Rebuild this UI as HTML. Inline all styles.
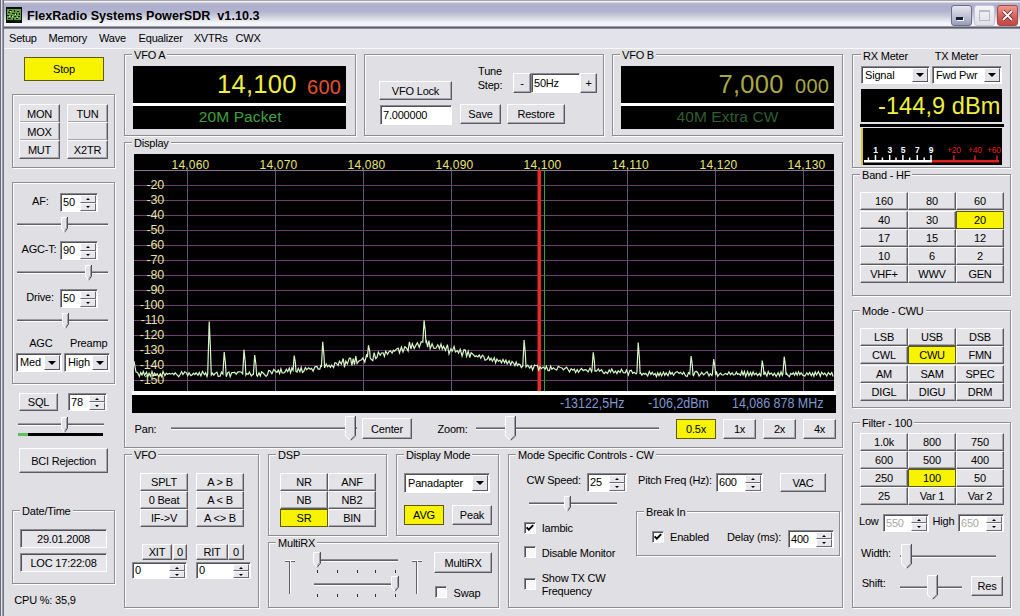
<!DOCTYPE html><html><head><meta charset="utf-8"><style>
*{box-sizing:border-box}
body{margin:0;width:1020px;height:616px;overflow:hidden;position:relative;background:#e0dfe3;font-family:"Liberation Sans",sans-serif;font-size:11px;color:#000;letter-spacing:-0.2px}
div{position:absolute}
.t{white-space:nowrap}
.g{border:1px solid #8e8d94;box-shadow:inset 1px 1px 0 #fff,1px 1px 0 #fff;box-sizing:content-box}
.g{width:auto}
.gl{background:#e0dfe3;padding:0 2px 0 2px;font-size:11px;line-height:13px;white-space:nowrap}
.b{background:#e4e3e8;border-top:1px solid #fff;border-left:1px solid #fff;border-right:1px solid #5a5a60;border-bottom:1px solid #5a5a60;box-shadow:inset -1px -1px 0 #a6a5ab;display:flex;align-items:center;justify-content:center;font-size:11px;white-space:nowrap;overflow:hidden}
.b.y{background:#f8f400;border:1px solid #5c5a10;box-shadow:none}
.sp{background:#fff;border-top:1px solid #8a8990;border-left:1px solid #8a8990;border-right:1px solid #fff;border-bottom:1px solid #fff;box-shadow:inset 1px 1px 0 #505058}
.spt{left:2px;top:1px;white-space:nowrap}
.spb{right:1px;width:16px;background:#e8e8ec;border-top:1px solid #fff;border-left:1px solid #fff;border-bottom:1px solid #6a6a70;border-right:1px solid #6a6a70}
.up,.dn{position:absolute;left:5px;width:0;height:0;border-left:2.5px solid transparent;border-right:2.5px solid transparent}
.up{top:2px;border-bottom:2.5px solid #000}
.dn{top:2px;border-top:2.5px solid #000}
i{display:block}
.cb{background:#fff;border-top:1px solid #8a8990;border-left:1px solid #8a8990;border-right:1px solid #fff;border-bottom:1px solid #fff;box-shadow:inset 1px 1px 0 #505058}
.cbt{left:3px;top:1px;white-space:nowrap}
.cbb{right:1px;top:1px;bottom:1px;width:16px;background:#e4e3e8;border-top:1px solid #fff;border-left:1px solid #fff;border-bottom:1px solid #5a5a60;border-right:1px solid #5a5a60}
.dn2{position:absolute;left:3px;top:50%;margin-top:-2px;width:0;height:0;border-left:4px solid transparent;border-right:4px solid transparent;border-top:4px solid #000}
.tr{border-top:1px solid #8a8990;border-left:1px solid #8a8990;border-bottom:1px solid #fff;border-right:1px solid #fff;background:#c8c7cc;height:4px}
.th{width:11px;height:21px;}
.ck{background:#f8f8f8;border-top:1px solid #8a8990;border-left:1px solid #8a8990;border-right:1px solid #fff;border-bottom:1px solid #fff;box-shadow:inset 1px 1px 0 #505058}
.ck svg{position:absolute;left:0px;top:0px}
.blk{background:#000}
</style></head><body><div style="left:0;top:0;width:1020px;height:29px;background:linear-gradient(to bottom,#a4a4ac 0px,#a4a4ac 1px,#f6f6fa 1px,#f2f2f8 2px,#b8b8cc 3px,#aeaecc 6px,#b0b2d0 11px,#c4c6d6 15px,#e2e4ec 20px,#f4f6fb 23px,#f2f4f9 26px,#a0a0ac 26px,#a0a0ac 27px,#5c5c6a 27px,#5c5c6a 28px,#8c8c98 28px,#8c8c98 29px)"></div>
<div style="left:0;top:0;width:4px;height:616px;background:linear-gradient(to right,#6a6a78 0px,#6a6a78 1px,#e4e4ec 1px,#e4e4ec 2px,#9a9aa8 2px,#9a9aa8 3px,#747482 3px,#747482 4px)"></div>
<svg style="position:absolute;left:6px;top:7px" width="16" height="16" viewBox="0 0 16 16" shape-rendering="crispEdges"><rect width="16" height="16" fill="#081006"/><rect x="1" y="2" width="14" height="11" fill="#6a9c48"/><path d="M3 3h3v1h-3zM8 3h1v2h-1zM11 4h2v1h-2zM2 5h2v1h-2zM6 6h3v1h-3zM10 6h1v2h-1zM13 6h1v2h-1zM1 8h2v1h-2zM5 8h1v2h-1zM8 9h2v1h-2zM12 9h2v1h-2zM2 11h3v1h-3zM7 11h1v2h-1zM10 11h2v1h-2zM1 13h1v2h-1zM4 13h4v1h-4zM9 13h5v2h-5z" fill="#142010"/><path d="M4 4h1v1h-1zM9 7h1v1h-1zM6 9h1v1h-1zM11 10h1v1h-1zM3 9h1v1h-1z" fill="#c8f0a8"/></svg>
<div class="t" style="left:27px;top:10.33px;font-size:12.6px;line-height:12.6px;color:#000;font-weight:bold;letter-spacing:0px">FlexRadio Systems PowerSDR&nbsp; v1.10.3</div>
<div style="left:951px;top:5px;width:21px;height:21px;border:1px solid #6a6c88;border-radius:3px;background:linear-gradient(to bottom,#e4e6f0,#b4b6cc 70%,#9a9cb6)"><div style="left:4px;top:11px;width:7px;height:3px;background:#1a1a40;box-shadow:1px 1px 0 #fff"></div></div>
<div style="left:974px;top:5px;width:21px;height:21px;border:1px solid #c4c6d8;border-radius:3px;background:linear-gradient(to bottom,#f4f4f8,#e0e0ea)"><div style="left:4px;top:4px;width:11px;height:11px;border:1px solid #b8bac8;border-top-width:2px"></div></div>
<div style="left:997px;top:5px;width:21px;height:21px;border:1px solid #a04848;border-radius:3px;background:linear-gradient(to bottom,#ee9a90,#d85e5a 55%,#c44844)"><svg style="position:absolute;left:3px;top:3px" width="13" height="13" viewBox="0 0 13 13"><path d="M2 2L11 11M11 2L2 11" stroke="#5a2020" stroke-width="3.2"/><path d="M2 2L11 11M11 2L2 11" stroke="#fff" stroke-width="1.8"/></svg></div>
<div style="left:4px;top:29px;width:1016px;height:19px;background:#e3e4eb"></div>
<div style="left:4px;top:48px;width:1016px;height:1px;background:#f8f8fc"></div>
<div class="t" style="left:9px;top:32.69px;font-size:11px;line-height:11px;">Setup</div>
<div class="t" style="left:48.5px;top:32.69px;font-size:11px;line-height:11px;">Memory</div>
<div class="t" style="left:99px;top:32.69px;font-size:11px;line-height:11px;">Wave</div>
<div class="t" style="left:138.6px;top:32.69px;font-size:11px;line-height:11px;">Equalizer</div>
<div class="t" style="left:193.7px;top:32.69px;font-size:11px;line-height:11px;">XVTRs</div>
<div class="t" style="left:235.6px;top:32.69px;font-size:11px;line-height:11px;">CWX</div>
<div class="b y" style="left:24px;top:57px;width:80px;height:24px"><span>Stop</span></div>
<div class="g" style="left:12px;top:94px;width:101px;height:72px;"></div>
<div class="b" style="left:19px;top:104px;width:41px;height:19px;"><span>MON</span></div>
<div class="b" style="left:67px;top:104px;width:41px;height:19px;"><span>TUN</span></div>
<div class="b" style="left:19px;top:122px;width:41px;height:19px;"><span>MOX</span></div>
<div class="b" style="left:67px;top:122px;width:41px;height:19px;"><span></span></div>
<div class="b" style="left:19px;top:140px;width:41px;height:19px;"><span>MUT</span></div>
<div class="b" style="left:67px;top:140px;width:41px;height:19px;"><span>X2TR</span></div>
<div class="g" style="left:12px;top:182px;width:101px;height:200px;"></div>
<div class="t" style="left:32px;top:196.19px;font-size:11px;line-height:11px;">AF:</div>
<div class="sp" style="left:60px;top:193px;width:38px;height:19px;"><div class="spt" style="color:#000;font-size:11px;line-height:15px">50</div><div class="spb" style="top:1px;height:8px"><i class="up"></i></div><div class="spb" style="top:9px;height:8px"><i class="dn"></i></div></div>
<div style="left:17px;top:223px;width:91px;height:1px;background:#9a9aa0"></div>
<div style="left:17px;top:224px;width:91px;height:1px;background:#606066"></div>
<div style="left:17px;top:225px;width:91px;height:1px;background:#fff"></div>
<svg style="position:absolute;left:61.0px;top:217px" width="7" height="16" viewBox="0 0 7 16"><path d="M0.5 11 V0.5 H6.5 V11 L3.5 15.5 Z" fill="#e4e3e8"/><path d="M0.5 11 V0.5 H5.5" fill="none" stroke="#fff"/><path d="M6.5 0 V11 L3.5 15.5" fill="none" stroke="#505058"/><path d="M5.5 1 V10.5 L3.5 14.5" fill="none" stroke="#a0a0a8"/><path d="M0.5 11 L3.5 15.5" fill="none" stroke="#fff"/></svg>
<div class="t" style="left:21.5px;top:244.09px;font-size:11px;line-height:11px;">AGC-T:</div>
<div class="sp" style="left:60px;top:241px;width:38px;height:19px;"><div class="spt" style="color:#000;font-size:11px;line-height:15px">90</div><div class="spb" style="top:1px;height:8px"><i class="up"></i></div><div class="spb" style="top:9px;height:8px"><i class="dn"></i></div></div>
<div style="left:17px;top:271px;width:91px;height:1px;background:#9a9aa0"></div>
<div style="left:17px;top:272px;width:91px;height:1px;background:#606066"></div>
<div style="left:17px;top:273px;width:91px;height:1px;background:#fff"></div>
<svg style="position:absolute;left:85.0px;top:265px" width="7" height="16" viewBox="0 0 7 16"><path d="M0.5 11 V0.5 H6.5 V11 L3.5 15.5 Z" fill="#e4e3e8"/><path d="M0.5 11 V0.5 H5.5" fill="none" stroke="#fff"/><path d="M6.5 0 V11 L3.5 15.5" fill="none" stroke="#505058"/><path d="M5.5 1 V10.5 L3.5 14.5" fill="none" stroke="#a0a0a8"/><path d="M0.5 11 L3.5 15.5" fill="none" stroke="#fff"/></svg>
<div class="t" style="left:26.3px;top:291.69px;font-size:11px;line-height:11px;">Drive:</div>
<div class="sp" style="left:60px;top:289px;width:38px;height:19px;"><div class="spt" style="color:#000;font-size:11px;line-height:15px">50</div><div class="spb" style="top:1px;height:8px"><i class="up"></i></div><div class="spb" style="top:9px;height:8px"><i class="dn"></i></div></div>
<div style="left:17px;top:319px;width:91px;height:1px;background:#9a9aa0"></div>
<div style="left:17px;top:320px;width:91px;height:1px;background:#606066"></div>
<div style="left:17px;top:321px;width:91px;height:1px;background:#fff"></div>
<svg style="position:absolute;left:62.0px;top:313px" width="7" height="16" viewBox="0 0 7 16"><path d="M0.5 11 V0.5 H6.5 V11 L3.5 15.5 Z" fill="#e4e3e8"/><path d="M0.5 11 V0.5 H5.5" fill="none" stroke="#fff"/><path d="M6.5 0 V11 L3.5 15.5" fill="none" stroke="#505058"/><path d="M5.5 1 V10.5 L3.5 14.5" fill="none" stroke="#a0a0a8"/><path d="M0.5 11 L3.5 15.5" fill="none" stroke="#fff"/></svg>
<div class="t" style="left:29.2px;top:338.49px;font-size:11px;line-height:11px;">AGC</div>
<div class="t" style="left:70px;top:338.49px;font-size:11px;line-height:11px;">Preamp</div>
<div class="cb" style="left:16px;top:353px;width:46px;height:19px;"><div class="cbt" style="font-size:11px;line-height:15px">Med</div><div class="cbb"><i class="dn2"></i></div></div>
<div class="cb" style="left:64px;top:353px;width:46px;height:19px;"><div class="cbt" style="font-size:11px;line-height:15px">High</div><div class="cbb"><i class="dn2"></i></div></div>
<div class="b" style="left:19px;top:393px;width:39px;height:18px;"><span>SQL</span></div>
<div class="sp" style="left:68px;top:393px;width:39px;height:18px;"><div class="spt" style="color:#000;font-size:11px;line-height:14px">78</div><div class="spb" style="top:1px;height:7px"><i class="up"></i></div><div class="spb" style="top:8px;height:8px"><i class="dn"></i></div></div>
<div style="left:18px;top:423px;width:86px;height:1px;background:#9a9aa0"></div>
<div style="left:18px;top:424px;width:86px;height:1px;background:#606066"></div>
<div style="left:18px;top:425px;width:86px;height:1px;background:#fff"></div>
<svg style="position:absolute;left:61.0px;top:417px" width="7" height="16" viewBox="0 0 7 16"><path d="M0.5 11 V0.5 H6.5 V11 L3.5 15.5 Z" fill="#e4e3e8"/><path d="M0.5 11 V0.5 H5.5" fill="none" stroke="#fff"/><path d="M6.5 0 V11 L3.5 15.5" fill="none" stroke="#505058"/><path d="M5.5 1 V10.5 L3.5 14.5" fill="none" stroke="#a0a0a8"/><path d="M0.5 11 L3.5 15.5" fill="none" stroke="#fff"/></svg>
<div style="left:18px;top:433px;width:85px;height:3px;background:#000"></div>
<div style="left:18px;top:433px;width:10px;height:3px;background:#5cc05c"></div>
<div class="b" style="left:19px;top:448px;width:89px;height:25px;"><span>BCI Rejection</span></div>
<div class="g" style="left:12px;top:510px;width:101px;height:72px;"></div>
<div class="gl" style="left:20px;top:505px">Date/Time</div>
<div class="sp" style="left:20px;top:529px;width:87px;height:19px;background:#e6e5ea;display:flex;align-items:center;justify-content:center;font-size:11px"><span>29.01.2008</span></div>
<div class="sp" style="left:20px;top:553px;width:87px;height:19px;background:#e6e5ea;display:flex;align-items:center;justify-content:center;font-size:11px"><span>LOC 17:22:08</span></div>
<div class="t" style="left:14.3px;top:594.69px;font-size:11px;line-height:11px;">CPU %: 35,9</div>
<div class="g" style="left:124px;top:54px;width:230px;height:80px;"></div>
<div class="gl" style="left:132px;top:49px">VFO A</div>
<div class="blk" style="left:133px;top:66px;width:213px;height:37px"></div>
<div style="left:133px;top:103px;width:213px;height:3px;background:#fff"></div>
<div class="blk" style="left:133px;top:106px;width:213px;height:23px"></div>
<div class="t" style="left:217px;top:72.11px;font-size:25.5px;line-height:25.5px;color:#f0f040;letter-spacing:0.3px">14,100</div>
<div class="t" style="left:307px;top:76.77px;font-size:20px;line-height:20px;color:#e85030;letter-spacing:0.3px">600</div>
<div class="t" style="left:198.8px;top:109.48px;font-size:15.5px;line-height:15.5px;color:#40a040;letter-spacing:0.1px">20M Packet</div>
<div class="g" style="left:364px;top:54px;width:238px;height:80px;"></div>
<div class="b" style="left:379px;top:81px;width:73px;height:19px;"><span>VFO Lock</span></div>
<div class="sp" style="left:380px;top:105px;width:72px;height:20px"><div class="spt" style="font-size:11px;line-height:16px">7.000000</div></div>
<div class="b" style="left:460px;top:104px;width:41px;height:20px;"><span>Save</span></div>
<div class="b" style="left:507px;top:104px;width:58px;height:20px;"><span>Restore</span></div>
<div class="t" style="left:470px;top:65px;width:40px;text-align:center;font-size:11px;line-height:13.5px">Tune<br>Step:</div>
<div class="b" style="left:513px;top:73px;width:18px;height:20px;"><span>-</span></div>
<div class="sp" style="left:531px;top:73px;width:49px;height:20px"><div class="spt" style="font-size:11px;line-height:16px">50Hz</div></div>
<div class="b" style="left:580px;top:73px;width:17px;height:20px;"><span>+</span></div>
<div class="g" style="left:612px;top:54px;width:229px;height:80px;"></div>
<div class="gl" style="left:620px;top:49px">VFO B</div>
<div class="blk" style="left:621px;top:66px;width:213px;height:37px"></div>
<div style="left:621px;top:103px;width:213px;height:3px;background:#fff"></div>
<div class="blk" style="left:621px;top:106px;width:213px;height:23px"></div>
<div class="t" style="left:718.5px;top:71.81px;font-size:25.5px;line-height:25.5px;color:#a8a848;letter-spacing:0.3px">7,000</div>
<div class="t" style="left:795px;top:76.47px;font-size:20px;line-height:20px;color:#a8a848;letter-spacing:0.3px">000</div>
<div class="t" style="left:676.5px;top:109.48px;font-size:15.5px;line-height:15.5px;color:#2e5e2e;letter-spacing:0.1px">40M Extra CW</div>
<div class="g" style="left:124px;top:142px;width:717px;height:304px;"></div>
<div class="gl" style="left:132px;top:137px">Display</div>
<svg style="position:absolute;left:0;top:0" width="1020" height="616"><rect x="134" y="154" width="700" height="237" fill="#000"/><line x1="134" y1="185.5" x2="834" y2="185.5" stroke="#6e3e70" stroke-width="1"/><line x1="134" y1="200.5" x2="834" y2="200.5" stroke="#6e3e70" stroke-width="1"/><line x1="134" y1="215.5" x2="834" y2="215.5" stroke="#6e3e70" stroke-width="1"/><line x1="134" y1="230.5" x2="834" y2="230.5" stroke="#6e3e70" stroke-width="1"/><line x1="134" y1="245.5" x2="834" y2="245.5" stroke="#6e3e70" stroke-width="1"/><line x1="134" y1="260.5" x2="834" y2="260.5" stroke="#6e3e70" stroke-width="1"/><line x1="134" y1="275.5" x2="834" y2="275.5" stroke="#6e3e70" stroke-width="1"/><line x1="134" y1="290.5" x2="834" y2="290.5" stroke="#6e3e70" stroke-width="1"/><line x1="134" y1="305.5" x2="834" y2="305.5" stroke="#6e3e70" stroke-width="1"/><line x1="134" y1="320.5" x2="834" y2="320.5" stroke="#6e3e70" stroke-width="1"/><line x1="134" y1="335.5" x2="834" y2="335.5" stroke="#6e3e70" stroke-width="1"/><line x1="134" y1="350.5" x2="834" y2="350.5" stroke="#6e3e70" stroke-width="1"/><line x1="134" y1="365.5" x2="834" y2="365.5" stroke="#6e3e70" stroke-width="1"/><line x1="134" y1="380.5" x2="834" y2="380.5" stroke="#6e3e70" stroke-width="1"/><line x1="134" y1="170.5" x2="834" y2="170.5" stroke="#8c7090" stroke-width="1"/><line x1="187.5" y1="170" x2="187.5" y2="391" stroke="#665478" stroke-width="1"/><line x1="275.5" y1="170" x2="275.5" y2="391" stroke="#665478" stroke-width="1"/><line x1="363.5" y1="170" x2="363.5" y2="391" stroke="#665478" stroke-width="1"/><line x1="451.5" y1="170" x2="451.5" y2="391" stroke="#665478" stroke-width="1"/><line x1="539.5" y1="170" x2="539.5" y2="391" stroke="#665478" stroke-width="1"/><line x1="627.5" y1="170" x2="627.5" y2="391" stroke="#665478" stroke-width="1"/><line x1="715.5" y1="170" x2="715.5" y2="391" stroke="#665478" stroke-width="1"/><line x1="803.5" y1="170" x2="803.5" y2="391" stroke="#665478" stroke-width="1"/><text x="190.5" y="168.8" fill="#e6e67c" font-size="12" letter-spacing="0.2" text-anchor="middle" font-family="Liberation Sans">14,060</text><text x="278.5" y="168.8" fill="#e6e67c" font-size="12" letter-spacing="0.2" text-anchor="middle" font-family="Liberation Sans">14,070</text><text x="366.5" y="168.8" fill="#e6e67c" font-size="12" letter-spacing="0.2" text-anchor="middle" font-family="Liberation Sans">14,080</text><text x="454.5" y="168.8" fill="#e6e67c" font-size="12" letter-spacing="0.2" text-anchor="middle" font-family="Liberation Sans">14,090</text><text x="542.5" y="168.8" fill="#e6e67c" font-size="12" letter-spacing="0.2" text-anchor="middle" font-family="Liberation Sans">14,100</text><text x="630.5" y="168.8" fill="#e6e67c" font-size="12" letter-spacing="0.2" text-anchor="middle" font-family="Liberation Sans">14,110</text><text x="718.5" y="168.8" fill="#e6e67c" font-size="12" letter-spacing="0.2" text-anchor="middle" font-family="Liberation Sans">14,120</text><text x="806.5" y="168.8" fill="#e6e67c" font-size="12" letter-spacing="0.2" text-anchor="middle" font-family="Liberation Sans">14,130</text><text x="164" y="189.3" fill="#e4e2a4" font-size="12.5" text-anchor="end" font-family="Liberation Sans">-20</text><text x="164" y="204.3" fill="#e4e2a4" font-size="12.5" text-anchor="end" font-family="Liberation Sans">-30</text><text x="164" y="219.3" fill="#e4e2a4" font-size="12.5" text-anchor="end" font-family="Liberation Sans">-40</text><text x="164" y="234.3" fill="#e4e2a4" font-size="12.5" text-anchor="end" font-family="Liberation Sans">-50</text><text x="164" y="249.3" fill="#e4e2a4" font-size="12.5" text-anchor="end" font-family="Liberation Sans">-60</text><text x="164" y="264.3" fill="#e4e2a4" font-size="12.5" text-anchor="end" font-family="Liberation Sans">-70</text><text x="164" y="279.3" fill="#e4e2a4" font-size="12.5" text-anchor="end" font-family="Liberation Sans">-80</text><text x="164" y="294.3" fill="#e4e2a4" font-size="12.5" text-anchor="end" font-family="Liberation Sans">-90</text><text x="164" y="309.3" fill="#e4e2a4" font-size="12.5" text-anchor="end" font-family="Liberation Sans">-100</text><text x="164" y="324.3" fill="#e4e2a4" font-size="12.5" text-anchor="end" font-family="Liberation Sans">-110</text><text x="164" y="339.3" fill="#e4e2a4" font-size="12.5" text-anchor="end" font-family="Liberation Sans">-120</text><text x="164" y="354.3" fill="#e4e2a4" font-size="12.5" text-anchor="end" font-family="Liberation Sans">-130</text><text x="164" y="369.3" fill="#e4e2a4" font-size="12.5" text-anchor="end" font-family="Liberation Sans">-140</text><text x="164" y="384.3" fill="#e4e2a4" font-size="12.5" text-anchor="end" font-family="Liberation Sans">-150</text><rect x="537.5" y="170" width="3.5" height="221" fill="#e42a2a"/><line x1="544.5" y1="170" x2="544.5" y2="391" stroke="#30a040" stroke-width="1"/><polyline points="134.0,361.0 136.0,372.0 137.5,372.3 139.4,376.4 140.7,372.5 142.0,375.0 143.3,371.5 144.6,375.2 146.5,372.2 147.8,376.4 149.1,373.3 150.4,376.2 152.0,371.6 153.3,375.5 154.6,373.1 155.9,375.0 157.2,373.7 158.5,376.4 160.4,373.8 161.7,376.6 163.0,371.3 164.9,375.7 166.2,373.1 167.5,374.2 169.4,373.5 170.7,374.2 172.6,373.3 173.9,374.7 175.2,372.8 177.1,374.8 178.7,376.7 180.3,374.3 181.6,371.6 182.9,374.6 184.8,371.8 186.4,372.8 187.7,375.7 189.0,372.8 190.9,375.7 192.2,374.7 193.5,373.2 194.8,374.6 196.1,372.8 198.0,375.3 199.3,372.5 200.9,376.0 202.5,371.4 204.4,374.7 205.7,372.6 207.0,376.6 207.7,374.0 209.2,321.5 210.4,347.8 211.3,375.0 212.5,373.2 213.8,375.2 215.1,373.4 217.0,372.1 218.3,376.6 220.2,376.0 221.5,372.1 222.9,374.0 224.2,352.0 225.4,363.0 226.1,375.0 226.3,376.8 227.6,372.8 228.9,371.9 230.2,376.6 231.8,372.6 233.1,372.7 234.4,372.3 236.3,374.2 237.6,372.1 239.2,371.9 241.1,372.0 242.7,374.0 244.0,349.7 245.2,361.9 245.9,375.0 246.8,373.6 248.1,374.4 249.4,372.0 251.3,375.9 253.2,373.8 253.4,374.0 254.7,355.0 255.9,364.5 256.6,375.0 257.4,376.2 259.0,372.7 260.3,375.9 261.6,371.7 262.9,372.8 264.5,374.5 266.1,376.4 267.4,374.9 268.7,370.5 270.0,370.7 271.9,373.8 273.8,369.3 275.4,371.2 277.0,372.4 278.3,370.1 279.6,373.6 280.9,368.9 282.2,373.0 283.8,373.0 285.1,371.8 286.4,369.3 287.7,371.7 289.3,368.0 290.6,372.8 291.9,367.9 293.1,370.3 294.2,355.5 295.4,362.9 295.9,371.3 297.0,372.0 298.3,368.4 299.9,371.9 301.2,367.5 302.5,372.4 303.8,371.3 305.4,367.5 306.7,369.8 308.6,367.8 310.2,369.2 311.5,368.4 313.1,371.1 315.0,366.7 316.9,366.4 318.2,369.1 319.8,369.1 321.1,364.8 321.4,366.9 322.7,341.8 323.9,354.3 324.6,367.9 326.2,363.9 327.5,366.7 329.1,365.1 330.4,367.3 331.7,365.0 333.6,367.7 334.9,362.7 336.2,363.0 338.1,365.5 339.4,361.2 341.3,364.1 343.2,358.5 344.5,367.3 345.8,361.2 347.4,363.9 349.3,358.1 350.6,358.3 351.9,365.3 353.2,358.7 354.5,364.6 355.8,356.1 357.1,363.5 358.7,361.2 360.3,360.2 361.6,359.7 362.9,357.9 364.8,362.1 366.7,354.2 367.4,357.1 368.5,345.3 369.7,351.2 370.2,358.1 371.2,359.3 372.8,360.7 374.1,352.7 375.7,358.7 377.0,357.5 378.3,352.0 380.2,355.3 381.5,353.0 383.1,352.9 384.4,356.5 385.7,351.2 387.6,354.2 388.9,351.8 390.2,350.7 392.1,353.1 393.4,350.2 394.7,351.1 396.6,348.9 398.2,348.2 399.5,352.9 401.4,347.0 403.0,351.9 404.9,346.7 406.5,347.9 408.1,351.1 409.4,341.9 411.0,349.2 412.3,343.7 414.2,348.5 416.1,344.9 417.4,342.8 419.3,347.3 421.2,341.7 422.8,342.2 424.1,320.2 425.3,331.2 426.0,343.2 426.3,340.0 427.6,347.2 428.9,340.5 430.2,348.7 432.1,343.9 434.0,348.4 435.9,348.2 437.8,344.8 439.4,348.5 441.0,344.0 442.3,349.2 443.6,346.2 445.5,350.4 447.4,344.6 449.0,354.0 450.9,348.8 452.2,351.2 454.1,346.4 455.4,352.0 457.3,350.6 458.6,353.0 460.2,349.2 462.1,356.0 464.0,349.8 465.3,350.1 466.6,356.4 468.2,351.3 469.8,357.7 471.1,352.8 472.4,353.8 473.7,355.2 475.0,356.7 476.3,355.7 477.9,356.9 479.2,354.9 480.8,358.2 482.4,355.3 483.7,356.4 485.0,360.2 486.9,359.6 488.5,356.6 489.8,360.2 491.1,358.3 492.4,361.2 494.3,357.7 495.6,362.8 496.9,359.0 498.5,361.4 500.1,360.1 501.4,362.8 503.0,359.5 504.6,362.8 505.9,360.0 507.2,363.8 509.1,360.9 510.7,364.9 512.0,361.4 513.6,363.1 514.9,365.8 516.2,362.1 517.5,365.6 518.8,364.0 520.1,364.7 521.4,367.7 522.8,366.0 524.1,340.0 525.3,353.0 526.0,367.0 527.8,365.1 529.7,368.1 531.3,365.8 532.6,370.1 534.5,365.1 536.1,365.7 537.4,365.3 538.7,370.0 540.0,366.7 541.3,368.7 543.2,367.1 545.1,369.2 546.4,366.2 548.0,370.6 549.3,370.6 550.6,366.0 551.9,369.3 553.5,367.9 555.4,369.6 556.7,370.1 558.3,366.3 560.2,367.5 562.1,368.0 563.4,369.9 564.7,368.7 566.6,367.1 568.2,369.8 569.5,371.9 571.1,368.7 573.0,370.3 574.3,369.1 575.6,372.6 577.2,369.5 578.5,372.3 579.8,370.4 581.4,368.5 583.3,370.6 584.9,369.6 586.2,369.9 588.1,372.0 590.0,368.1 591.6,371.8 592.0,370.7 593.2,352.3 594.4,361.5 595.0,371.7 595.1,370.4 596.4,371.3 598.3,368.8 599.6,371.2 601.5,369.6 603.1,372.5 604.4,373.6 605.7,371.9 607.6,373.5 609.2,369.8 610.5,372.2 611.8,368.9 613.7,372.7 615.6,371.2 616.9,373.7 618.2,370.7 620.1,372.4 621.4,369.3 623.3,372.6 625.2,372.8 626.5,370.0 628.4,375.0 629.7,370.7 631.3,370.3 632.6,373.3 634.2,372.2 636.1,373.9 636.9,372.9 638.2,342.6 639.4,357.8 640.1,373.9 640.3,372.4 641.9,375.1 643.2,373.3 644.5,374.3 645.8,373.4 647.7,376.0 649.3,371.5 650.9,374.5 652.2,372.3 653.5,374.9 655.1,373.5 656.4,376.5 657.7,372.9 659.0,375.6 660.3,372.8 661.6,375.9 663.5,372.1 664.8,375.3 666.1,372.8 668.0,375.6 669.6,371.4 670.9,374.3 672.2,372.5 673.5,375.3 675.4,372.5 677.3,371.6 679.2,373.5 680.5,372.4 682.4,374.3 683.7,372.2 685.6,375.8 687.2,376.5 688.5,372.6 689.8,374.0 691.1,356.0 692.3,365.0 693.0,375.0 693.6,375.6 694.9,372.1 696.2,371.2 697.8,372.7 699.1,376.1 700.4,374.5 701.7,372.4 703.6,374.8 705.2,373.4 707.1,371.7 709.0,376.0 710.3,373.7 711.9,375.5 712.4,374.0 713.7,359.0 714.9,366.5 715.6,375.0 716.4,371.4 717.7,376.4 719.3,374.2 720.6,373.2 721.9,375.0 723.5,374.9 725.4,373.4 727.3,374.6 728.9,372.0 730.5,374.8 732.1,372.8 733.4,374.8 735.0,374.7 736.3,372.1 737.6,374.4 738.9,373.7 740.5,375.3 741.8,371.2 743.1,374.9 744.4,371.5 745.7,376.6 747.6,371.5 748.9,375.6 750.5,372.5 751.8,375.5 753.1,371.8 754.4,374.8 756.3,373.1 757.6,375.6 759.5,373.3 760.8,376.5 761.1,374.0 762.2,360.6 763.4,367.3 763.9,375.0 765.0,372.2 766.9,376.1 768.2,371.4 769.5,374.3 771.4,373.0 773.0,375.5 774.3,373.2 776.2,376.4 778.1,372.7 779.7,376.0 781.0,371.8 782.3,375.4 782.9,374.0 784.2,356.7 785.4,365.4 786.1,375.0 786.2,372.4 787.5,375.0 789.4,376.7 790.7,373.5 792.0,374.4 793.3,372.9 794.6,375.2 795.9,372.3 797.2,375.2 798.5,371.8 799.8,374.8 801.1,372.8 803.0,375.4 804.9,376.0 806.8,372.8 808.1,374.9 809.7,372.5 811.3,375.7 812.6,372.9 813.9,376.2 815.2,371.9 816.5,375.0 818.4,371.6 820.3,376.2 821.6,372.2 823.5,374.6 824.8,373.0 826.7,376.0 828.3,372.6 830.2,374.7 831.8,372.6 833.1,376.5" fill="none" stroke="#d8f6c8" stroke-width="1.2" stroke-linejoin="miter"/><rect x="132" y="391" width="704" height="4" fill="#fff"/><rect x="132" y="395" width="704" height="18" fill="#000"/></svg>
<div class="t" style="left:560px;top:395.75px;font-size:14px;line-height:14px;color:#7f98cf;transform:scaleX(0.89);transform-origin:0 0;letter-spacing:0">-13122,5Hz</div>
<div class="t" style="left:648px;top:395.75px;font-size:14px;line-height:14px;color:#7f98cf;transform:scaleX(0.89);transform-origin:0 0;letter-spacing:0">-106,2dBm</div>
<div class="t" style="left:732px;top:395.75px;font-size:14px;line-height:14px;color:#7f98cf;transform:scaleX(0.89);transform-origin:0 0;letter-spacing:0">14,086 878 MHz</div>
<div class="t" style="left:134.6px;top:423.69px;font-size:11px;line-height:11px;">Pan:</div>
<div style="left:171px;top:427px;width:186px;height:1px;background:#9a9aa0"></div>
<div style="left:171px;top:428px;width:186px;height:1px;background:#606066"></div>
<div style="left:171px;top:429px;width:186px;height:1px;background:#fff"></div>
<svg style="position:absolute;left:345.0px;top:416px" width="11" height="25" viewBox="0 0 11 25"><path d="M0.5 20 V0.5 H10.5 V20 L5.5 24.5 Z" fill="#e4e3e8"/><path d="M0.5 20 V0.5 H9.5" fill="none" stroke="#fff"/><path d="M10.5 0 V20 L5.5 24.5" fill="none" stroke="#505058"/><path d="M9.5 1 V19.5 L5.5 23.5" fill="none" stroke="#a0a0a8"/><path d="M0.5 20 L5.5 24.5" fill="none" stroke="#fff"/></svg>
<div class="b" style="left:362px;top:418px;width:50px;height:21px;"><span>Center</span></div>
<div class="t" style="left:437.5px;top:423.69px;font-size:11px;line-height:11px;">Zoom:</div>
<div style="left:476px;top:427px;width:183px;height:1px;background:#9a9aa0"></div>
<div style="left:476px;top:428px;width:183px;height:1px;background:#606066"></div>
<div style="left:476px;top:429px;width:183px;height:1px;background:#fff"></div>
<svg style="position:absolute;left:505.0px;top:416px" width="11" height="25" viewBox="0 0 11 25"><path d="M0.5 20 V0.5 H10.5 V20 L5.5 24.5 Z" fill="#e4e3e8"/><path d="M0.5 20 V0.5 H9.5" fill="none" stroke="#fff"/><path d="M10.5 0 V20 L5.5 24.5" fill="none" stroke="#505058"/><path d="M9.5 1 V19.5 L5.5 23.5" fill="none" stroke="#a0a0a8"/><path d="M0.5 20 L5.5 24.5" fill="none" stroke="#fff"/></svg>
<div class="b y" style="left:676px;top:419px;width:40px;height:20px;"><span>0.5x</span></div>
<div class="b" style="left:723px;top:419px;width:33px;height:20px;"><span>1x</span></div>
<div class="b" style="left:763px;top:419px;width:33px;height:20px;"><span>2x</span></div>
<div class="b" style="left:803px;top:419px;width:33px;height:20px;"><span>4x</span></div>
<div class="g" style="left:124px;top:454px;width:133px;height:152px;"></div>
<div class="gl" style="left:132px;top:449px">VFO</div>
<div class="b" style="left:140px;top:473px;width:48px;height:18px;"><span>SPLT</span></div>
<div class="b" style="left:196px;top:473px;width:48px;height:18px;"><span>A &gt; B</span></div>
<div class="b" style="left:140px;top:491px;width:48px;height:18px;"><span>0 Beat</span></div>
<div class="b" style="left:196px;top:491px;width:48px;height:18px;"><span>A &lt; B</span></div>
<div class="b" style="left:140px;top:509px;width:48px;height:18px;"><span>IF-&gt;V</span></div>
<div class="b" style="left:196px;top:509px;width:48px;height:18px;"><span>A &lt;&gt; B</span></div>
<div class="b" style="left:142px;top:544px;width:30px;height:16px;"><span>XIT</span></div>
<div class="b" style="left:173px;top:544px;width:14px;height:16px;"><span>0</span></div>
<div class="b" style="left:196px;top:544px;width:32px;height:16px;"><span>RIT</span></div>
<div class="b" style="left:228px;top:544px;width:16px;height:16px;"><span>0</span></div>
<div class="sp" style="left:132px;top:562px;width:55px;height:17px;"><div class="spt" style="color:#000;font-size:11px;line-height:13px">0</div><div class="spb" style="top:1px;height:7px"><i class="up"></i></div><div class="spb" style="top:8px;height:7px"><i class="dn"></i></div></div>
<div class="sp" style="left:196px;top:562px;width:55px;height:17px;"><div class="spt" style="color:#000;font-size:11px;line-height:13px">0</div><div class="spb" style="top:1px;height:7px"><i class="up"></i></div><div class="spb" style="top:8px;height:7px"><i class="dn"></i></div></div>
<div class="g" style="left:268px;top:454px;width:117px;height:80px;"></div>
<div class="gl" style="left:276px;top:449px">DSP</div>
<div class="b" style="left:280px;top:473px;width:48px;height:18px;"><span>NR</span></div>
<div class="b" style="left:328px;top:473px;width:48px;height:18px;"><span>ANF</span></div>
<div class="b" style="left:280px;top:491px;width:48px;height:18px;"><span>NB</span></div>
<div class="b" style="left:328px;top:491px;width:48px;height:18px;"><span>NB2</span></div>
<div class="b y" style="left:280px;top:509px;width:48px;height:18px;"><span>SR</span></div>
<div class="b" style="left:328px;top:509px;width:48px;height:18px;"><span>BIN</span></div>
<div class="g" style="left:396px;top:454px;width:101px;height:80px;"></div>
<div class="gl" style="left:404px;top:449px">Display Mode</div>
<div class="cb" style="left:404px;top:473px;width:86px;height:20px;"><div class="cbt" style="font-size:11px;line-height:16px">Panadapter</div><div class="cbb"><i class="dn2"></i></div></div>
<div class="b y" style="left:404px;top:505px;width:40px;height:20px;"><span>AVG</span></div>
<div class="b" style="left:452px;top:505px;width:40px;height:20px;"><span>Peak</span></div>
<div class="g" style="left:268px;top:542px;width:229px;height:64px;"></div>
<div class="gl" style="left:276px;top:537px">MultiRX</div>
<div class="b" style="left:434px;top:552px;width:58px;height:21px;"><span>MultiRX</span></div>
<div style="left:285px;top:560px;width:10px;height:2px;background:#fff;border-bottom:1px solid #606066"></div>
<div style="left:289px;top:561px;width:1px;height:33px;background:#606066"></div>
<div style="left:290px;top:561px;width:1px;height:33px;background:#fff"></div>
<div style="left:412px;top:560px;width:10px;height:2px;background:#fff;border-bottom:1px solid #606066"></div>
<div style="left:416px;top:561px;width:1px;height:33px;background:#606066"></div>
<div style="left:417px;top:561px;width:1px;height:33px;background:#fff"></div>
<div style="left:314px;top:559px;width:84px;height:1px;background:#8a8a90"></div>
<div style="left:314px;top:560px;width:84px;height:1px;background:#606066"></div>
<div style="left:314px;top:561px;width:84px;height:1px;background:#fff"></div>
<div style="left:317px;top:570px;width:1px;height:3px;background:#303036"></div>
<div style="left:337px;top:570px;width:1px;height:3px;background:#303036"></div>
<div style="left:357px;top:570px;width:1px;height:3px;background:#303036"></div>
<div style="left:375px;top:570px;width:1px;height:3px;background:#303036"></div>
<div style="left:395px;top:570px;width:1px;height:3px;background:#303036"></div>
<div style="left:314px;top:583px;width:84px;height:1px;background:#8a8a90"></div>
<div style="left:314px;top:584px;width:84px;height:1px;background:#606066"></div>
<div style="left:314px;top:585px;width:84px;height:1px;background:#fff"></div>
<div style="left:317px;top:594px;width:1px;height:3px;background:#303036"></div>
<div style="left:337px;top:594px;width:1px;height:3px;background:#303036"></div>
<div style="left:357px;top:594px;width:1px;height:3px;background:#303036"></div>
<div style="left:375px;top:594px;width:1px;height:3px;background:#303036"></div>
<div style="left:395px;top:594px;width:1px;height:3px;background:#303036"></div>
<svg style="position:absolute;left:313px;top:552px" width="8" height="16" viewBox="0 0 8 16"><path d="M0.5 11 V0.5 H7.5 V11 L4.0 15.5 Z" fill="#e4e3e8"/><path d="M0.5 11 V0.5 H6.5" fill="none" stroke="#fff"/><path d="M7.5 0 V11 L4.0 15.5" fill="none" stroke="#505058"/><path d="M6.5 1 V10.5 L4.0 14.5" fill="none" stroke="#a0a0a8"/><path d="M0.5 11 L4.0 15.5" fill="none" stroke="#fff"/></svg>
<svg style="position:absolute;left:391px;top:576px" width="8" height="16" viewBox="0 0 8 16"><path d="M0.5 11 V0.5 H7.5 V11 L4.0 15.5 Z" fill="#e4e3e8"/><path d="M0.5 11 V0.5 H6.5" fill="none" stroke="#fff"/><path d="M7.5 0 V11 L4.0 15.5" fill="none" stroke="#505058"/><path d="M6.5 1 V10.5 L4.0 14.5" fill="none" stroke="#a0a0a8"/><path d="M0.5 11 L4.0 15.5" fill="none" stroke="#fff"/></svg>
<div class="ck" style="left:435px;top:586px;width:12px;height:12px;"></div>
<div class="t" style="left:453.6px;top:587.69px;font-size:11px;line-height:11px;">Swap</div>
<div class="g" style="left:508px;top:454px;width:333px;height:152px;"></div>
<div class="gl" style="left:516px;top:449px">Mode Specific Controls - CW</div>
<div class="t" style="left:526.4px;top:475.09px;font-size:11px;line-height:11px;">CW Speed:</div>
<div class="sp" style="left:587px;top:473px;width:40px;height:19px;"><div class="spt" style="color:#000;font-size:11px;line-height:15px">25</div><div class="spb" style="top:1px;height:8px"><i class="up"></i></div><div class="spb" style="top:9px;height:8px"><i class="dn"></i></div></div>
<div style="left:529px;top:502px;width:88px;height:1px;background:#9a9aa0"></div>
<div style="left:529px;top:503px;width:88px;height:1px;background:#606066"></div>
<div style="left:529px;top:504px;width:88px;height:1px;background:#fff"></div>
<svg style="position:absolute;left:564.0px;top:496px" width="7" height="16" viewBox="0 0 7 16"><path d="M0.5 11 V0.5 H6.5 V11 L3.5 15.5 Z" fill="#e4e3e8"/><path d="M0.5 11 V0.5 H5.5" fill="none" stroke="#fff"/><path d="M6.5 0 V11 L3.5 15.5" fill="none" stroke="#505058"/><path d="M5.5 1 V10.5 L3.5 14.5" fill="none" stroke="#a0a0a8"/><path d="M0.5 11 L3.5 15.5" fill="none" stroke="#fff"/></svg>
<div class="t" style="left:638px;top:475.09px;font-size:11px;line-height:11px;">Pitch Freq (Hz):</div>
<div class="sp" style="left:716px;top:473px;width:47px;height:19px;"><div class="spt" style="color:#000;font-size:11px;line-height:15px">600</div><div class="spb" style="top:1px;height:8px"><i class="up"></i></div><div class="spb" style="top:9px;height:8px"><i class="dn"></i></div></div>
<div class="b" style="left:780px;top:473px;width:46px;height:19px;"><span>VAC</span></div>
<div class="ck" style="left:524px;top:522px;width:12px;height:12px;"><svg width="10" height="10" viewBox="0 0 10 10"><path d="M1.6 4.4 L3.8 6.6 L8.2 2.2" fill="none" stroke="#000" stroke-width="1.9"/></svg></div>
<div class="t" style="left:541.7px;top:523.19px;font-size:11px;line-height:11px;">Iambic</div>
<div class="ck" style="left:524px;top:546px;width:12px;height:12px;"></div>
<div class="t" style="left:541.7px;top:547.69px;font-size:11px;line-height:11px;">Disable Monitor</div>
<div class="ck" style="left:524px;top:578px;width:12px;height:12px;"></div>
<div class="t" style="left:541.7px;top:572px;font-size:11px;line-height:13px">Show TX CW<br>Frequency</div>
<div class="g" style="left:636px;top:511px;width:202px;height:43px;"></div>
<div class="gl" style="left:644px;top:506px">Break In</div>
<div class="ck" style="left:652px;top:531px;width:12px;height:12px;"><svg width="10" height="10" viewBox="0 0 10 10"><path d="M1.6 4.4 L3.8 6.6 L8.2 2.2" fill="none" stroke="#000" stroke-width="1.9"/></svg></div>
<div class="t" style="left:670px;top:531.69px;font-size:11px;line-height:11px;">Enabled</div>
<div class="t" style="left:727px;top:531.69px;font-size:11px;line-height:11px;">Delay (ms):</div>
<div class="sp" style="left:788px;top:530px;width:46px;height:18px;"><div class="spt" style="color:#000;font-size:11px;line-height:14px">400</div><div class="spb" style="top:1px;height:7px"><i class="up"></i></div><div class="spb" style="top:8px;height:8px"><i class="dn"></i></div></div>
<div class="g" style="left:852px;top:54px;width:157px;height:112px;"></div>
<div class="gl" style="left:861px;top:50px;width:120px">RX Meter</div>
<div class="t" style="left:934.7px;top:50px;line-height:13px">TX Meter</div>
<div class="cb" style="left:861px;top:66px;width:69px;height:18px;"><div class="cbt" style="font-size:11px;line-height:14px">Signal</div><div class="cbb"><i class="dn2"></i></div></div>
<div class="cb" style="left:932px;top:66px;width:70px;height:18px;"><div class="cbt" style="font-size:11px;line-height:14px">Fwd Pwr</div><div class="cbb"><i class="dn2"></i></div></div>
<div class="blk" style="left:861px;top:89px;width:141px;height:33px"></div>
<div class="t" style="left:878px;top:94.71px;font-size:23.5px;line-height:23.5px;color:#f0f040;letter-spacing:0.1px">-144,9 dBm</div>
<div style="left:860px;top:124px;width:144px;height:3px;background:#000"></div>
<div class="blk" style="left:861px;top:128px;width:141px;height:37px"></div>
<div style="left:861px;top:128px;width:2px;height:37px;background:#d8c840"></div>
<svg style="position:absolute;left:0;top:0" width="1020" height="616"><rect x="864" y="160" width="68" height="2.5" fill="#fff"/><rect x="932" y="160" width="67" height="2.5" fill="#e02020"/><rect x="874.75" y="155" width="1.5" height="6" fill="#fff"/><rect x="888.95" y="155" width="1.5" height="6" fill="#fff"/><rect x="902.15" y="155" width="1.5" height="6" fill="#fff"/><rect x="916.55" y="155" width="1.5" height="6" fill="#fff"/><rect x="930.25" y="155" width="1.5" height="6" fill="#fff"/><rect x="867.65" y="157.5" width="1.5" height="4" fill="#fff"/><rect x="881.65" y="157.5" width="1.5" height="4" fill="#fff"/><rect x="895.25" y="157.5" width="1.5" height="4" fill="#fff"/><rect x="908.95" y="157.5" width="1.5" height="4" fill="#fff"/><rect x="923.45" y="157.5" width="1.5" height="4" fill="#fff"/><rect x="953.05" y="155.5" width="1.5" height="5" fill="#e02020"/><rect x="974.25" y="155.5" width="1.5" height="5" fill="#e02020"/><rect x="996.25" y="155.5" width="1.5" height="5" fill="#e02020"/><text x="875.5" y="152.7" fill="#fff" font-size="8.5" font-weight="bold" text-anchor="middle" font-family="Liberation Sans">1</text><text x="889.7" y="152.7" fill="#fff" font-size="8.5" font-weight="bold" text-anchor="middle" font-family="Liberation Sans">3</text><text x="902.9" y="152.7" fill="#fff" font-size="8.5" font-weight="bold" text-anchor="middle" font-family="Liberation Sans">5</text><text x="917.3" y="152.7" fill="#fff" font-size="8.5" font-weight="bold" text-anchor="middle" font-family="Liberation Sans">7</text><text x="931" y="152.7" fill="#fff" font-size="8.5" font-weight="bold" text-anchor="middle" font-family="Liberation Sans">9</text><text x="953.8" y="152.7" fill="#e02020" font-size="8.5" text-anchor="middle" font-family="Liberation Sans">+20</text><text x="975" y="152.7" fill="#e02020" font-size="8.5" text-anchor="middle" font-family="Liberation Sans">+40</text><text x="994" y="152.7" fill="#e02020" font-size="8.5" text-anchor="middle" font-family="Liberation Sans">+60</text></svg>
<div class="g" style="left:852px;top:174px;width:157px;height:120px;"></div>
<div class="gl" style="left:860px;top:169px">Band - HF</div>
<div class="b" style="left:860px;top:192px;width:48px;height:18px;"><span>160</span></div>
<div class="b" style="left:908px;top:192px;width:48px;height:18px;"><span>80</span></div>
<div class="b" style="left:956px;top:192px;width:48px;height:18px;"><span>60</span></div>
<div class="b" style="left:860px;top:211px;width:48px;height:18px;"><span>40</span></div>
<div class="b" style="left:908px;top:211px;width:48px;height:18px;"><span>30</span></div>
<div class="b y" style="left:956px;top:211px;width:48px;height:18px;"><span>20</span></div>
<div class="b" style="left:860px;top:229px;width:48px;height:18px;"><span>17</span></div>
<div class="b" style="left:908px;top:229px;width:48px;height:18px;"><span>15</span></div>
<div class="b" style="left:956px;top:229px;width:48px;height:18px;"><span>12</span></div>
<div class="b" style="left:860px;top:247px;width:48px;height:18px;"><span>10</span></div>
<div class="b" style="left:908px;top:247px;width:48px;height:18px;"><span>6</span></div>
<div class="b" style="left:956px;top:247px;width:48px;height:18px;"><span>2</span></div>
<div class="b" style="left:860px;top:265px;width:48px;height:18px;"><span>VHF+</span></div>
<div class="b" style="left:908px;top:265px;width:48px;height:18px;"><span>WWV</span></div>
<div class="b" style="left:956px;top:265px;width:48px;height:18px;"><span>GEN</span></div>
<div class="g" style="left:852px;top:310px;width:157px;height:96px;"></div>
<div class="gl" style="left:860px;top:305px">Mode - CWU</div>
<div class="b" style="left:860px;top:328px;width:48px;height:18px;"><span>LSB</span></div>
<div class="b" style="left:908px;top:328px;width:48px;height:18px;"><span>USB</span></div>
<div class="b" style="left:956px;top:328px;width:48px;height:18px;"><span>DSB</span></div>
<div class="b" style="left:860px;top:346px;width:48px;height:18px;"><span>CWL</span></div>
<div class="b y" style="left:908px;top:346px;width:48px;height:18px;"><span>CWU</span></div>
<div class="b" style="left:956px;top:346px;width:48px;height:18px;"><span>FMN</span></div>
<div class="b" style="left:860px;top:365px;width:48px;height:18px;"><span>AM</span></div>
<div class="b" style="left:908px;top:365px;width:48px;height:18px;"><span>SAM</span></div>
<div class="b" style="left:956px;top:365px;width:48px;height:18px;"><span>SPEC</span></div>
<div class="b" style="left:860px;top:383px;width:48px;height:18px;"><span>DIGL</span></div>
<div class="b" style="left:908px;top:383px;width:48px;height:18px;"><span>DIGU</span></div>
<div class="b" style="left:956px;top:383px;width:48px;height:18px;"><span>DRM</span></div>
<div class="g" style="left:852px;top:422px;width:157px;height:184px;"></div>
<div class="gl" style="left:860px;top:417px">Filter - 100</div>
<div class="b" style="left:860px;top:433px;width:48px;height:18px;"><span>1.0k</span></div>
<div class="b" style="left:908px;top:433px;width:48px;height:18px;"><span>800</span></div>
<div class="b" style="left:956px;top:433px;width:48px;height:18px;"><span>750</span></div>
<div class="b" style="left:860px;top:451px;width:48px;height:18px;"><span>600</span></div>
<div class="b" style="left:908px;top:451px;width:48px;height:18px;"><span>500</span></div>
<div class="b" style="left:956px;top:451px;width:48px;height:18px;"><span>400</span></div>
<div class="b" style="left:860px;top:469px;width:48px;height:18px;"><span>250</span></div>
<div class="b y" style="left:908px;top:469px;width:48px;height:18px;"><span>100</span></div>
<div class="b" style="left:956px;top:469px;width:48px;height:18px;"><span>50</span></div>
<div class="b" style="left:860px;top:487px;width:48px;height:18px;"><span>25</span></div>
<div class="b" style="left:908px;top:487px;width:48px;height:18px;"><span>Var 1</span></div>
<div class="b" style="left:956px;top:487px;width:48px;height:18px;"><span>Var 2</span></div>
<div class="t" style="left:859px;top:515.69px;font-size:11px;line-height:11px;">Low</div>
<div class="sp" style="left:883px;top:514px;width:46px;height:18px;"><div class="spt" style="color:#a8a8a8;font-size:11px;line-height:14px">550</div><div class="spb" style="top:1px;height:7px"><i class="up"></i></div><div class="spb" style="top:8px;height:8px"><i class="dn"></i></div></div>
<div class="t" style="left:932.6px;top:515.69px;font-size:11px;line-height:11px;">High</div>
<div class="sp" style="left:958px;top:514px;width:46px;height:18px;"><div class="spt" style="color:#a8a8a8;font-size:11px;line-height:14px">650</div><div class="spb" style="top:1px;height:7px"><i class="up"></i></div><div class="spb" style="top:8px;height:8px"><i class="dn"></i></div></div>
<div class="t" style="left:861px;top:547.69px;font-size:11px;line-height:11px;">Width:</div>
<div style="left:900px;top:555px;width:96px;height:1px;background:#9a9aa0"></div>
<div style="left:900px;top:556px;width:96px;height:1px;background:#606066"></div>
<div style="left:900px;top:557px;width:96px;height:1px;background:#fff"></div>
<svg style="position:absolute;left:900.5px;top:544px" width="11" height="25" viewBox="0 0 11 25"><path d="M0.5 20 V0.5 H10.5 V20 L5.5 24.5 Z" fill="#e4e3e8"/><path d="M0.5 20 V0.5 H9.5" fill="none" stroke="#fff"/><path d="M10.5 0 V20 L5.5 24.5" fill="none" stroke="#505058"/><path d="M9.5 1 V19.5 L5.5 23.5" fill="none" stroke="#a0a0a8"/><path d="M0.5 20 L5.5 24.5" fill="none" stroke="#fff"/></svg>
<div class="t" style="left:861.7px;top:577.69px;font-size:11px;line-height:11px;">Shift:</div>
<div style="left:900px;top:586px;width:62px;height:1px;background:#9a9aa0"></div>
<div style="left:900px;top:587px;width:62px;height:1px;background:#606066"></div>
<div style="left:900px;top:588px;width:62px;height:1px;background:#fff"></div>
<svg style="position:absolute;left:926.5px;top:575px" width="11" height="25" viewBox="0 0 11 25"><path d="M0.5 20 V0.5 H10.5 V20 L5.5 24.5 Z" fill="#e4e3e8"/><path d="M0.5 20 V0.5 H9.5" fill="none" stroke="#fff"/><path d="M10.5 0 V20 L5.5 24.5" fill="none" stroke="#505058"/><path d="M9.5 1 V19.5 L5.5 23.5" fill="none" stroke="#a0a0a8"/><path d="M0.5 20 L5.5 24.5" fill="none" stroke="#fff"/></svg>
<div class="b" style="left:971px;top:576px;width:32px;height:20px;"><span>Res</span></div>
<div style="display:none"></div></body></html>
